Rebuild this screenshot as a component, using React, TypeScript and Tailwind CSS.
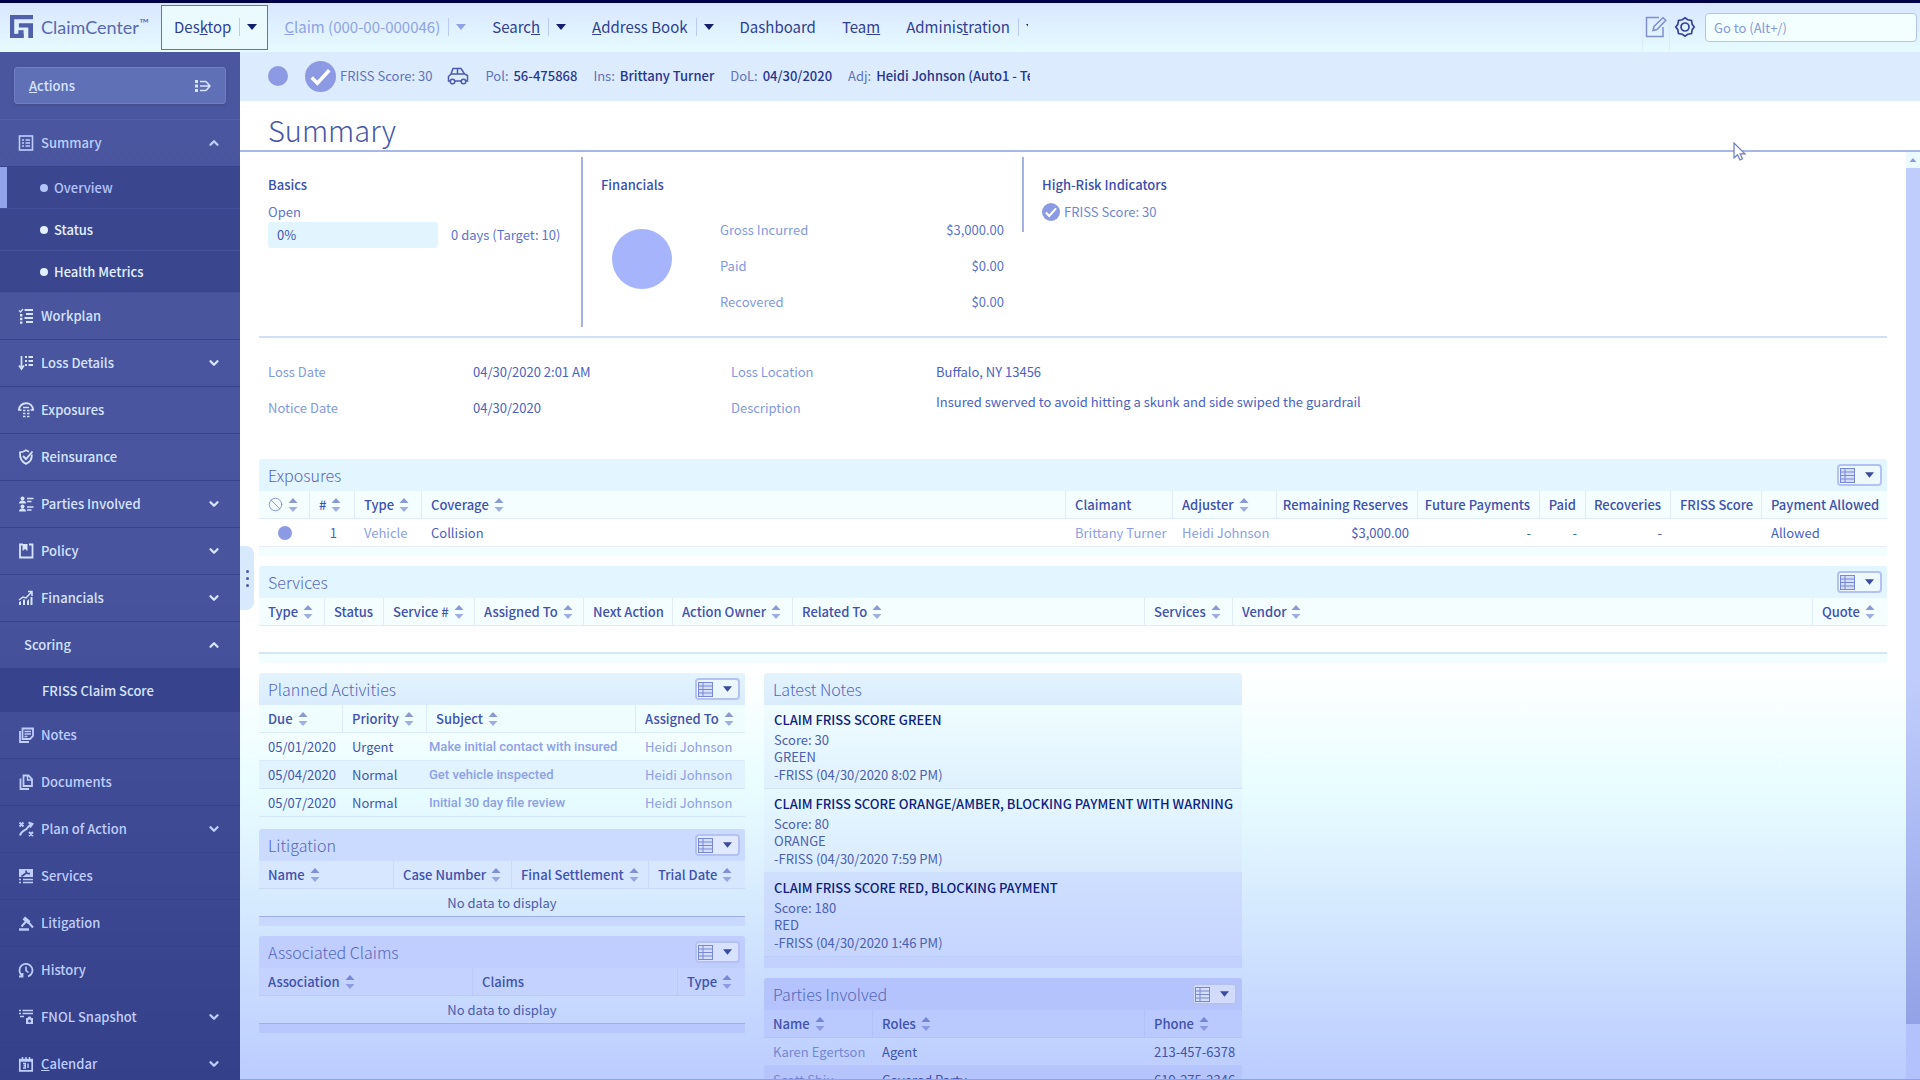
import type { ReactNode } from "react";
import { ChevronDown, ChevronUp, Ban } from "lucide-react";
import clsx from "clsx";

type Align = "left" | "right" | "center";

interface Column {
  label: ReactNode;
  width?: string;
  sort?: boolean;
  align?: Align;
}

interface NavItem {
  label: ReactNode;
  icon?: ReactNode;
  state?: "open" | "closed";
}

const ICONS = {
  summary: (
    <>
      <rect x="1.5" y="1" width="13" height="14" fill="none" stroke="currentColor" strokeWidth="1.6" />
      <path d="M4 5h2M7.5 5H12M4 8h2M7.5 8H12M4 11h2M7.5 11H12" stroke="currentColor" strokeWidth="1.4" />
    </>
  ),
  workplan: (
    <>
      <path d="M1 2.5l1.5 1.5L5 1" fill="none" stroke="currentColor" strokeWidth="1.3" />
      <path d="M6.5 2H15M8 6h7M6.5 10H15M8 14h7" stroke="currentColor" strokeWidth="1.9" />
      <path d="M2 6h2.4v2.4H2zM2 9.800h2.400v2.400H2zM2 13.400h2.400v2.400H2z" fill="currentColor" />
    </>
  ),
  loss: (
    <>
      <path d="M3.500 1v11M1 10.500l2.500 3.500L6 10.500" fill="none" stroke="currentColor" strokeWidth="1.700" />
      <path d="M7 2h2M7 6h2M7 10h2M10.500 2H15M10.500 6H15M10.500 10H15" stroke="currentColor" strokeWidth="2" />
    </>
  ),
  exposures: (
    <>
      <path d="M1 8C1 4 4 1.300 8 1.300S15 4 15 8" fill="none" stroke="currentColor" strokeWidth="2" />
      <path d="M0 8h3.500M12.500 8H16M5 5.500h6" stroke="currentColor" strokeWidth="1.400" />
      <path d="M5 8.500h2.500M9 8.500h2.500M5 11.500h2.500M9 11.500h2.500M5 14.500h2.500M9 14.500h2.500" stroke="currentColor" strokeWidth="1.500" />
    </>
  ),
  reinsurance: (
    <>
      <path d="M13.800 5.500c.3 4.500-2 7.700-5.800 9.300C3.800 13.200 1.700 10 2 3.300c2.500 0 4.200-.8 6-2l3 1.400" fill="none" stroke="currentColor" strokeWidth="1.800" />
      <path d="M5 7l3 3 6.500-7.500" fill="none" stroke="currentColor" strokeWidth="1.900" />
    </>
  ),
  parties: (
    <>
      <circle cx="4.500" cy="2.500" r="2" fill="currentColor" />
      <path d="M1 7.500c0-2 1.500-3 3.500-3s3.500 1 3.500 3z" fill="currentColor" />
      <circle cx="4.500" cy="10.500" r="2" fill="currentColor" />
      <path d="M1 15.500c0-2 1.500-3 3.500-3s3.500 1 3.500 3z" fill="currentColor" />
      <path d="M9 2.500h6.500M9 5.500h4.500M9 11h6.500M9 14h4.500" stroke="currentColor" strokeWidth="1.600" />
    </>
  ),
  policy: (
    <>
      <path d="M5 1.500H2v13h12.500v-13H11" fill="none" stroke="currentColor" strokeWidth="1.800" />
      <path d="M4.500 1h5v7L7 6 4.500 8z" fill="currentColor" />
    </>
  ),
  financials: (
    <>
      <path d="M1 10l4-3 3 1 5.500-6M10 1.500h4V6" fill="none" stroke="currentColor" strokeWidth="1.500" />
      <path d="M1 15v-3l2-1v4zM5 15V9.500h2V15zM9 15v-4l2-2v6zM12.500 15V7h2v8z" fill="currentColor" />
    </>
  ),
  notes: (
    <>
      <path d="M4.500 1.500H15V9l-3 3H4.500zM2 4v11h9" fill="none" stroke="currentColor" strokeWidth="1.800" />
      <path d="M6.500 4.500H13M6.500 7H13M6.500 9.500h3" stroke="currentColor" strokeWidth="1.300" />
    </>
  ),
  documents: (
    <>
      <path d="M5.500 1.500h5L14 5v7H5.500zM2.500 4.500v10.500H11" fill="none" stroke="currentColor" strokeWidth="1.800" />
      <path d="M9.500 1.500v4.500H14" fill="none" stroke="currentColor" strokeWidth="1.400" />
    </>
  ),
  plan: (
    <>
      <path d="M1.500 1.500l4 4M5.500 1.500l-4 4M11 11l4 4M15 11l-4 4M2 14.500C3 10 7 9.500 8.500 8S11 3.500 14 3M10.500 1.500L14.500 3 12 6.500" fill="none" stroke="currentColor" strokeWidth="1.900" />
    </>
  ),
  services: (
    <>
      <path d="M1 1h14v8H1z" fill="currentColor" />
      <path d="M3.500 8.500L9 4.500M8 2.500c0 2.500 1.500 3.500 4 3" fill="none" stroke="#3d4a92" strokeWidth="1.700" />
      <path d="M1 11.500h2M5 11.500h10M1 14.500h2M5 14.500h10" stroke="currentColor" strokeWidth="1.700" />
    </>
  ),
  litigation: (
    <>
      <path d="M7 1.500l5.500 4.500-2.500 3L4.500 4.500z" fill="currentColor" />
      <path d="M8.500 6l-5 5.500M10.500 7.500l4.500 5" stroke="currentColor" strokeWidth="2" />
      <path d="M1 14.500h10" stroke="currentColor" strokeWidth="2.400" />
    </>
  ),
  history: (
    <>
      <path d="M4 13.500A6.500 6.500 0 1 1 10 14.500M1 14.500h3.500V11" fill="none" stroke="currentColor" strokeWidth="1.800" />
      <path d="M8 4.500v4l2.500 2" fill="none" stroke="currentColor" strokeWidth="1.600" />
    </>
  ),
  fnol: (
    <>
      <path d="M1 1.500h2M4.500 1.500H15M1 4.500h2M4.500 4.500H15M2 7.500h4" stroke="currentColor" strokeWidth="1.700" />
      <path d="M8 9h1.500l1-1.500h2L13.500 9H15v6H8z" fill="currentColor" />
      <circle cx="11.500" cy="12" r="1.500" fill="#3d4a92" />
    </>
  ),
  calendar: (
    <>
      <path d="M1.800 3.500h12.400v11.300H1.800zM1.800 5h12.400" fill="none" stroke="currentColor" strokeWidth="1.700" />
      <path d="M4.500 1v2.500M8 1v2.500M11.500 1v2.500M5 7.500h2.300v4.500H5M5.500 9.800h1.500M10 7.500V12" fill="none" stroke="currentColor" strokeWidth="1.400" />
    </>
  ),
};

function SideIcon({ name }: { name: keyof typeof ICONS }) {
  return (
    <svg viewBox="0 0 16 16" className="size-4" aria-hidden="true">
      {ICONS[name]}
    </svg>
  );
}

const NAV_TOP: NavItem[] = [
  { label: "Workplan", icon: <SideIcon name="workplan" /> },
  { label: "Loss Details", icon: <SideIcon name="loss" />, state: "closed" },
  { label: "Exposures", icon: <SideIcon name="exposures" /> },
  { label: "Reinsurance", icon: <SideIcon name="reinsurance" /> },
  { label: "Parties Involved", icon: <SideIcon name="parties" />, state: "closed" },
  { label: "Policy", icon: <SideIcon name="policy" />, state: "closed" },
  { label: "Financials", icon: <SideIcon name="financials" />, state: "closed" },
];

const NAV_BOTTOM: NavItem[] = [
  { label: "Notes", icon: <SideIcon name="notes" /> },
  { label: "Documents", icon: <SideIcon name="documents" /> },
  { label: "Plan of Action", icon: <SideIcon name="plan" />, state: "closed" },
  { label: "Services", icon: <SideIcon name="services" /> },
  { label: "Litigation", icon: <SideIcon name="litigation" /> },
  { label: "History", icon: <SideIcon name="history" /> },
  { label: "FNOL Snapshot", icon: <SideIcon name="fnol" />, state: "closed" },
  { label: <><u>C</u>alendar</>, icon: <SideIcon name="calendar" />, state: "closed" },
];

const EXPOSURE_COLUMNS: Column[] = [
  { label: <Ban className="size-[15px] text-[#7f90d6]" strokeWidth={1.5} aria-label="Blocked" />, width: "w-[51px]", sort: true },
  { label: "#", width: "w-[45px]", sort: true },
  { label: "Type", width: "w-[67px]", sort: true },
  { label: "Coverage", sort: true },
  { label: "Claimant", width: "w-[107px]" },
  { label: "Adjuster", width: "w-[104px]", sort: true },
  { label: "Remaining Reserves", width: "w-[141px]", align: "right" },
  { label: "Future Payments", width: "w-[122px]", align: "right" },
  { label: "Paid", width: "w-[46px]", align: "right" },
  { label: "Recoveries", width: "w-[85px]", align: "right" },
  { label: "FRISS Score", width: "w-[91px]" },
  { label: "Payment Allowed", width: "w-[125px]" },
];

const SERVICE_COLUMNS: Column[] = [
  { label: "Type", width: "w-[66px]", sort: true },
  { label: "Status", width: "w-[59px]" },
  { label: "Service #", width: "w-[91px]", sort: true },
  { label: "Assigned To", width: "w-[109px]", sort: true },
  { label: "Next Action", width: "w-[89px]" },
  { label: "Action Owner", width: "w-[120px]", sort: true },
  { label: "Related To", width: "w-[352px]", sort: true },
  { label: "Services", width: "w-[88px]", sort: true },
  { label: "Vendor", sort: true },
  { label: "Quote", width: "w-[74px]", sort: true },
];

const ACTIVITIES = [
  { due: "05/01/2020", priority: "Urgent", subject: "Make initial contact with insured" },
  { due: "05/04/2020", priority: "Normal", subject: "Get vehicle inspected" },
  { due: "05/07/2020", priority: "Normal", subject: "Initial 30 day file review" },
];

const NOTES = [
  { title: "CLAIM FRISS SCORE GREEN", score: 30, color: "GREEN", time: "8:02 PM", bg: "from-[#f0fdff] to-[#dff1fe]" },
  { title: "CLAIM FRISS SCORE ORANGE/AMBER, BLOCKING PAYMENT WITH WARNING", score: 80, color: "ORANGE", time: "7:59 PM", bg: "from-[#e6f9ff] to-[#d9eafe]" },
  { title: "CLAIM FRISS SCORE RED, BLOCKING PAYMENT", score: 180, color: "RED", time: "1:46 PM", bg: "from-[#cfdffe] to-[#c6d5ff]" },
];

const PARTIES = [
  { name: "Karen Egertson", role: "Agent", phone: "213-457-6378" },
  { name: "Scott Shiu", role: "Covered Party", phone: "619-275-2346" },
];

function Caret({ className = "h-1.5 w-2.5" }: { className?: string }) {
  return (
    <svg viewBox="0 0 10 6" className={clsx("shrink-0", className)} aria-hidden="true">
      <path d="M0 0h10L5 6z" fill="currentColor" />
    </svg>
  );
}

function SortIcon() {
  return (
    <svg viewBox="0 0 10 14" className="h-3.5 w-2.5 shrink-0 opacity-60" aria-hidden="true">
      <path d="M5 0l4.500 5h-9z" fill="#4658b8" />
      <path d="M5 14l4.500-5h-9z" fill="#6a7bd0" />
    </svg>
  );
}

function ScoreCheck({ className }: { className: string }) {
  return (
    <svg viewBox="0 0 30 30" className={clsx("shrink-0", className)} aria-hidden="true">
      <circle cx="15" cy="15" r="15" fill="#8b9ae2" />
      <path d="M6.500 16l5.500 5.500L23.500 9" fill="none" stroke="#fff" strokeWidth="3.500" />
    </svg>
  );
}

function TopItem({ children, menu, muted }: { children: ReactNode; menu?: boolean; muted?: boolean }) {
  return (
    <div className={clsx("flex shrink-0 items-center pb-0.5", muted ? "text-[#8fa3e6]" : "text-[#303f91]")}>
      <a href="#">{children}</a>
      {menu && (
        <button aria-label="Open menu" className={clsx("ml-2 flex h-[18px] items-center border-l border-[#bccbf3] pl-[7px]", muted ? "text-[#8fa3e6]" : "text-[#131f6d]")}>
          <Caret />
        </button>
      )}
    </div>
  );
}

function Header() {
  return (
    <header className="flex h-[52px] shrink-0 items-center border-t-[3px] border-[#000048] bg-linear-to-b from-[#d9e6ff] to-[#e6fbff] pr-[3px]">
      <div className="flex w-[161px] shrink-0 items-center gap-2 pb-0.5 pl-2.5">
        <svg viewBox="0 0 22 22" className="size-[23px] text-[#5160ab]" aria-label="Guidewire">
          <path d="M22 0v4H4v14h9v4H0V0z" fill="currentColor" />
          <path d="M8.500 8H22v14h-4.500V12h-9z" fill="currentColor" />
          <path d="M8 14.500h5V22H8z" fill="currentColor" />
        </svg>
        <span className="flex items-start font-[Lato] text-[18px] leading-6 text-[#5968b0]">
          ClaimCenter<span className="text-[13px] leading-4">™</span>
        </span>
      </div>
      <nav className="flex h-full w-[867px] items-center gap-4 overflow-hidden text-[15px] leading-6">
        <div className="flex h-[45px] shrink-0 items-center border border-[#6274be] bg-[#eafaff] pr-2.5 pl-3">
          <TopItem menu>Des<u>k</u>top</TopItem>
        </div>
        <div className="flex shrink-0 items-center gap-[26px]">
          <TopItem menu muted><u>C</u>laim (000-00-000046)</TopItem>
          <TopItem menu>Searc<u>h</u></TopItem>
          <TopItem menu><u>A</u>ddress Book</TopItem>
          <TopItem>Dashboard</TopItem>
          <TopItem>Tea<u>m</u></TopItem>
          <TopItem menu>Adminis<u>t</u>ration</TopItem>
        </div>
      </nav>
      <div className="ml-auto flex items-center pb-px">
        <button aria-label="New note" className="flex h-[46px] w-7 items-center justify-center border-x border-[#dbe8fd] text-[#7d8ed4]">
          <svg viewBox="0 0 22 22" className="size-[22px]" fill="none" stroke="currentColor" strokeWidth="1.500" aria-hidden="true">
            <path d="M14 1.500H1.500v19H18V11M8 14.500l1-4L18 1.800l2.800 2.500L12 13.500z" />
          </svg>
        </button>
        <button aria-label="Settings" className="ml-1 text-[#35449a]">
          <svg viewBox="0 0 22 22" className="size-[22px]" fill="none" stroke="currentColor" strokeWidth="1.700" aria-hidden="true">
            <path d="M11 1.800L13.700 3.800 17.500 4.500 18.200 8.300 20.200 11 18.200 13.700 17.500 17.500 13.700 18.200 11 20.200 8.300 18.200 4.500 17.500 3.800 13.700 1.800 11 3.800 8.300 4.500 4.500 8.300 3.800z" />
            <circle cx="11" cy="11" r="4" />
          </svg>
        </button>
        <input
          aria-label="Go to"
          placeholder="Go to (Alt+/)"
          className="ml-[9px] h-[29px] w-[212px] rounded border border-[#b5c3ef] bg-[#f3feff] px-2 text-[13px] text-[#4a5cb5] placeholder:text-[#8598dc]"
        />
      </div>
    </header>
  );
}

function NavRow({ item, muted }: { item: NavItem; muted?: boolean }) {
  return (
    <a
      href="#"
      className={clsx(
        "flex h-[47px] items-center border-b border-[#36438a] pr-[19px]",
        item.icon ? "pl-[18px]" : "pl-6",
        muted ? "text-[#bfceff]" : "text-[#d5e4ff]",
      )}
    >
      {item.icon && <span className="mr-[7px]">{item.icon}</span>}
      {item.label}
      {item.state === "open" && <ChevronUp className="ml-auto size-3.5" strokeWidth={4} />}
      {item.state === "closed" && <ChevronDown className="ml-auto size-3.5" strokeWidth={4} />}
    </a>
  );
}

function Sidebar() {
  return (
    <aside className="w-60 shrink-0 overflow-hidden bg-linear-to-b from-[#4a569e] via-[#48549d] to-[#344089] text-[13px] leading-5 font-medium">
      <div className="h-[68px] border-b border-[#5562aa] px-3.5 pt-[15px]">
        <button className="flex h-[37px] w-full items-center justify-between rounded-[3px] border border-[#7080c4] bg-[#6070b7] px-3.5 text-[#d5e4ff] shadow">
          <span><u>A</u>ctions</span>
          <svg viewBox="0 0 16 14" className="h-3.5 w-4" aria-hidden="true">
            <path d="M0 1h3v3H0zM0 5.500h3v3H0zM0 10h3v3H0z" fill="currentColor" />
            <path d="M5 2.500h6M5 7h10M5 11.500h6M11 2.500L15 7l-4 4.500" fill="none" stroke="currentColor" strokeWidth="1.600" />
          </svg>
        </button>
      </div>
      <nav>
        <NavRow item={{ label: "Summary", icon: <SideIcon name="summary" />, state: "open" }} muted />
        <ul className="bg-[#3a478f]">
          {["Overview", "Status", "Health Metrics"].map((label, i) => (
            <li key={label} className="h-[42px] border-b border-[#45529b]">
              <a
                href="#"
                className={clsx(
                  "flex h-full items-center gap-1.5 border-l-[7px] pl-[33px]",
                  i === 0 ? "border-[#93a2ec] text-[#b3c3fb]" : "border-transparent text-[#e3f0ff]",
                )}
              >
                <span className="size-2 rounded-full bg-current" />
                {label}
              </a>
            </li>
          ))}
        </ul>
        {NAV_TOP.map((item, i) => (
          <NavRow key={i} item={item} />
        ))}
        <NavRow item={{ label: "Scoring", state: "open" }} />
        <a href="#" className="flex h-[43px] items-center bg-[#37448d] pl-[42px] text-[#d5e4ff]">FRISS Claim Score</a>
        {NAV_BOTTOM.map((item, i) => (
          <NavRow key={i} item={item} muted />
        ))}
      </nav>
    </aside>
  );
}

function InfoBar() {
  return (
    <div className="h-[49px] shrink-0 bg-[#dcecfe] pb-px pl-7">
      <div className="flex h-full w-[762px] items-center overflow-hidden text-[13px] leading-5 whitespace-nowrap text-[#6072bd]">
        <span className="size-5 shrink-0 rounded-full bg-[#8b9ae2]" />
        <ScoreCheck className="mr-1 ml-[17px] size-[31px]" />
        FRISS Score: 30
        <svg viewBox="0 0 22 18" className="mr-4 ml-[15px] h-[18px] w-[22px] shrink-0 text-[#4a5ab0]" fill="none" stroke="currentColor" strokeWidth="1.500" aria-hidden="true">
          <path d="M3 14H1.500V9.500L4 7l2-5.500h8L17.500 7l3 1.500V14H19M8 14h6M4 7h13.500M10.500 1.500V7" />
          <circle cx="5.500" cy="14.500" r="2.300" />
          <circle cx="16.500" cy="14.500" r="2.300" />
        </svg>
        <div className="flex gap-4 [&_b]:ml-0.5 [&_b]:font-medium [&_b]:text-[#26358f]">
          <span>Pol: <b>56-475868</b></span>
          <span>Ins: <b>Brittany Turner</b></span>
          <span>DoL: <b>04/30/2020</b></span>
          <span>Adj: <b>Heidi Johnson (Auto1 - Te</b></span>
        </div>
      </div>
    </div>
  );
}

function SummaryCards() {
  return (
    <section className="flex h-[186px] items-start border-b-2 border-[#cfe0f7] pt-[5px] text-[13px] leading-[22px] text-[#5b74cc]">
      <div className="h-[170px] w-[324px] border-r-2 border-[#a3b2e2] pt-[17px] pl-[9px]">
        <h2 className="font-medium text-[#3a50ae]">Basics</h2>
        <p className="mt-1.5 leading-5">Open</p>
        <div className="flex items-center gap-[13px]">
          <div className="h-[26px] w-[170px] rounded-[3px] bg-[#e2f5ff] px-[9px] leading-[26px] text-[#4157b3]">0%</div>
          0 days (Target: 10)
        </div>
      </div>
      <div className="h-[75px] w-[441px] border-r-2 border-[#a3b2e2] pt-[17px] pl-[18px]">
        <h2 className="font-medium text-[#3a50ae]">Financials</h2>
        <div className="flex items-start pr-[18px]">
          <span className="mt-[33px] ml-[11px] size-[60px] shrink-0 rounded-full bg-[#a6b5fb]" />
          <dl className="mt-[19px] ml-12 grid flex-1 grid-cols-2 gap-y-[7px] leading-[29px]">
            {[["Gross Incurred", "$3,000.00"], ["Paid", "$0.00"], ["Recovered", "$0.00"]].map(([label, value]) => (
              <div key={label} className="contents">
                <dt className="text-[#7f9ae2]">{label}</dt>
                <dd className="text-right">{value}</dd>
              </div>
            ))}
          </dl>
        </div>
      </div>
      <div className="pt-[17px] pl-[18px]">
        <h2 className="font-medium text-[#3a50ae]">High-Risk Indicators</h2>
        <p className="mt-1.5 flex items-center gap-1 leading-5 text-[#6f86d6]">
          <ScoreCheck className="size-[18px]" />
          FRISS Score: 30
        </p>
      </div>
    </section>
  );
}

function LossFacts() {
  return (
    <dl className="grid h-[121px] grid-cols-[205px_258px_205px_1fr] content-start gap-y-3.5 pt-[23px] pl-[9px] text-[13px] leading-[22px] text-[#4a63c0]">
      <dt className="text-[#7f9ae2]">Loss Date</dt>
      <dd>04/30/2020 2:01 AM</dd>
      <dt className="text-[#7f9ae2]">Loss Location</dt>
      <dd>Buffalo, NY 13456</dd>
      <dt className="text-[#7f9ae2]">Notice Date</dt>
      <dd>04/30/2020</dd>
      <dt className="text-[#7f9ae2]">Description</dt>
      <dd className="-mt-1.5">Insured swerved to avoid hitting a skunk and side swiped the guardrail</dd>
    </dl>
  );
}

function Panel({ title, bar, foot, tools = true, children }: { title: string; bar: string; foot: string; tools?: boolean; children: ReactNode }) {
  return (
    <section>
      <div className={clsx("flex h-8 items-center justify-between rounded-t-[3px] pr-[5px] pl-[9px]", bar)}>
        <h2 className="text-[16px] leading-7 font-light text-[#5567bd]">{title}</h2>
        {tools && (
          <button aria-label={`${title} view options`} className="flex h-[22px] w-[45px] items-center justify-between rounded border-2 border-[#b4c2f3] bg-white/40 pr-[6px] pl-px text-[#3b4ba0]">
            <svg viewBox="0 0 15 15" className="size-[15px] text-[#7789d2]" fill="none" stroke="currentColor" aria-hidden="true">
              <rect x="0.500" y="0.500" width="14" height="14" fill="#d5defb" />
              <path d="M0 4h15M0 7.500h15M0 11h15M5 1v13" />
            </svg>
            <Caret className="h-[6px] w-[9px]" />
          </button>
        )}
      </div>
      {children}
      <div className={foot} />
    </section>
  );
}

function DataTable({ columns, head, children }: { columns: Column[]; head: string; children?: ReactNode }) {
  return (
    <table className="w-full table-fixed border-separate border-spacing-0 text-[13px] leading-5 [&_td]:h-7 [&_td]:px-[9px] [&_td]:whitespace-nowrap">
      <thead>
        <tr className={head}>
          {columns.map((col, i) => (
            <th key={i} className={clsx("h-7 border-b border-[#8fa6ee]/20 px-[9px] text-left font-medium whitespace-nowrap text-[#3f52ad] not-last:border-r", col.width)}>
              <span className={clsx("flex items-center gap-[5px]", col.align === "right" && "justify-end")}>
                {col.label}
                {col.sort && <SortIcon />}
              </span>
            </th>
          ))}
        </tr>
      </thead>
      <tbody>{children}</tbody>
    </table>
  );
}

function EmptyRow({ span }: { span: number }) {
  return (
    <tr>
      <td colSpan={span} className="border-b border-[#9fb0ea] text-center text-[#4a5cae]">No data to display</td>
    </tr>
  );
}

function LeftPanels() {
  return (
    <div className="flex flex-col gap-2.5">
      <Panel title="Planned Activities" bar="bg-linear-to-b from-[#e3f4fe] to-[#daecfd]" foot="h-0.5">
        <DataTable
          head="bg-[#effdff]"
          columns={[
            { label: "Due", width: "w-[84px]", sort: true },
            { label: "Priority", width: "w-[84px]", sort: true },
            { label: "Subject", sort: true },
            { label: "Assigned To", width: "w-[109px]", sort: true },
          ]}
        >
          {ACTIVITIES.map((a) => (
            <tr key={a.due} className="text-[#4257b0] even:bg-[#e0f3fe] [&>td]:border-b [&>td]:border-[#8fa6ee]/20">
              <td>{a.due}</td>
              <td>{a.priority}</td>
              <td className="px-0.5!"><a href="#" className="font-[Roboto] font-medium text-[#8da1e8]">{a.subject}</a></td>
              <td><a href="#" className="text-[#8da1e8]">Heidi Johnson</a></td>
            </tr>
          ))}
        </DataTable>
      </Panel>
      <Panel title="Litigation" bar="bg-[#cbdbff]" foot="h-[9px] bg-[#c8d8ff]">
        <DataTable
          head="bg-[#d6e7ff]"
          columns={[
            { label: "Name", width: "w-[135px]", sort: true },
            { label: "Case Number", width: "w-[118px]", sort: true },
            { label: "Final Settlement", sort: true },
            { label: "Trial Date", width: "w-[96px]", sort: true },
          ]}
        >
          <EmptyRow span={4} />
        </DataTable>
      </Panel>
      <Panel title="Associated Claims" bar="bg-[#bfcdff]" foot="h-[9px] bg-[#b8c8ff]">
        <DataTable
          head="bg-[#c3d2ff]"
          columns={[
            { label: "Association", width: "w-[214px]", sort: true },
            { label: "Claims" },
            { label: "Type", width: "w-[67px]", sort: true },
          ]}
        >
          <EmptyRow span={3} />
        </DataTable>
      </Panel>
    </div>
  );
}

function RightPanels() {
  return (
    <div className="flex flex-col gap-2.5">
      <Panel title="Latest Notes" tools={false} bar="bg-linear-to-b from-[#e3f4fe] to-[#daecfd]" foot="h-[11px] bg-[#c2d1ff]">
        {NOTES.map((note) => (
          <article key={note.title} className={clsx("h-[84px] border-b border-[#8fa6ee]/30 bg-linear-to-b px-2.5 pt-[5px] text-[13px] text-[#4b5fb2]", note.bg)}>
            <h3 className="mb-px leading-5 font-medium whitespace-nowrap text-[#0f1f80]">{note.title}</h3>
            <p className="leading-[17px]">Score: {note.score}</p>
            <p className="leading-[17px]">{note.color}</p>
            <p className="leading-5">-FRISS (04/30/2020 {note.time})</p>
          </article>
        ))}
      </Panel>
      <Panel title="Parties Involved" bar="bg-[#b4c3fb]" foot="h-[9px]">
        <DataTable
          head="bg-[#bac9fe]"
          columns={[
            { label: "Name", width: "w-[109px]", sort: true },
            { label: "Roles", sort: true },
            { label: "Phone", width: "w-[97px]", sort: true },
          ]}
        >
          {PARTIES.map((p) => (
            <tr key={p.name} className="text-[#4254a8] even:bg-[#b5c4fb] [&>td]:border-b [&>td]:border-[#8fa6ee]/20">
              <td><a href="#" className="text-[#7587d4]">{p.name}</a></td>
              <td>{p.role}</td>
              <td>{p.phone}</td>
            </tr>
          ))}
        </DataTable>
      </Panel>
    </div>
  );
}

export default function App() {
  return (
    <div className="relative flex h-screen flex-col overflow-hidden bg-white font-['Noto_Sans_CJK_SC','Noto_Sans',sans-serif]">
      <Header />
      <div className="flex min-h-0 flex-1">
        <Sidebar />
        <main className="flex min-w-0 flex-1 flex-col border-b border-[#8da3e6] bg-linear-to-b from-white from-60% via-[#e8fdff] via-72% to-[#bbccff]">
          <InfoBar />
          <h1 className="h-[51px] shrink-0 border-b-2 border-[#a8b6e8] bg-white pl-7 text-[29px] leading-[56px] font-light text-[#4658a8]">Summary</h1>
          <div className="flex min-h-0 flex-1">
            <div className="min-w-0 flex-1 overflow-hidden pr-[19px] pl-[19px]">
              <SummaryCards />
              <LossFacts />
              <div className="flex flex-col gap-2.5">
                <Panel title="Exposures" bar="bg-[#e3f5fe]" foot="h-[9px] bg-[#f2fdff]">
                  <DataTable columns={EXPOSURE_COLUMNS} head="bg-[#f4feff]">
                    <tr className="text-[#4a5fbc] [&>td]:border-b [&>td]:border-[#8fa6ee]/20">
                      <td><span className="mx-auto block size-3.5 rounded-full bg-[#8b9ae2]" /></td>
                      <td className="pr-[18px]! text-right">1</td>
                      <td><a href="#" className="text-[#8ba0e6]">Vehicle</a></td>
                      <td>Collision</td>
                      <td><a href="#" className="text-[#8ba0e6]">Brittany Turner</a></td>
                      <td><a href="#" className="text-[#8ba0e6]">Heidi Johnson</a></td>
                      <td className="text-right">$3,000.00</td>
                      <td className="text-right">-</td>
                      <td className="text-right">-</td>
                      <td className="text-right">-</td>
                      <td />
                      <td>Allowed</td>
                    </tr>
                  </DataTable>
                </Panel>
                <Panel title="Services" bar="bg-[#e3f5fe]" foot="h-[9px] bg-[#f2fdff]">
                  <DataTable columns={SERVICE_COLUMNS} head="bg-[#f4feff]">
                    <tr>
                      <td colSpan={10} className="border-b-2 border-[#d6e7f8]" />
                    </tr>
                  </DataTable>
                </Panel>
                <div className="grid grid-cols-[486px_478px] gap-[19px]">
                  <LeftPanels />
                  <RightPanels />
                </div>
              </div>
            </div>
            <div className="flex w-3.5 shrink-0 flex-col bg-[#eafaff]" aria-hidden="true">
              <div className="flex h-4 items-center justify-center text-[#8b9ae2]">
                <Caret className="h-1 w-2 rotate-180" />
              </div>
              <div className="flex-1 bg-linear-to-b from-[#bfcdfc] from-60% to-[#93a2e6]" />
              <div className="h-[55px] bg-[#b3c1fd]" />
            </div>
          </div>
        </main>
      </div>

      {/* sidebar resize handle */}
      <button aria-label="Resize sidebar" className="absolute top-[546px] left-60 flex h-16 w-3.5 flex-col items-center justify-center gap-1 rounded-r-lg bg-[#d8e8fd]">
        <span className="size-[3px] rounded-full bg-[#4a5ab0]" />
        <span className="size-[3px] rounded-full bg-[#4a5ab0]" />
        <span className="size-[3px] rounded-full bg-[#4a5ab0]" />
      </button>

      {/* mouse pointer */}
      <svg viewBox="0 0 13 19" className="absolute top-[142px] right-[174px] h-[19px] w-[13px]" aria-hidden="true">
        <path d="M1 1v15l3.500-3.200L7 18l2.500-1.200-2.400-5H12z" fill="#fff" stroke="#6a7bc8" strokeWidth="1.200" />
      </svg>
    </div>
  );
}
